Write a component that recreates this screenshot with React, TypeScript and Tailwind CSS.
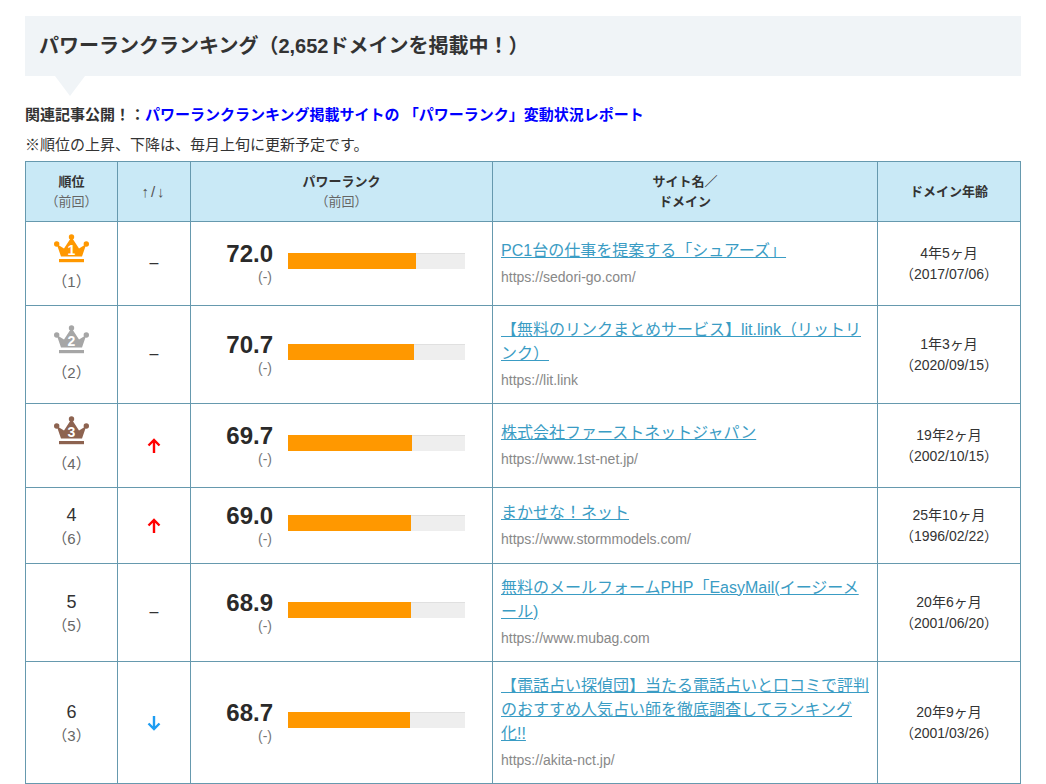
const FONT = "font-['Liberation_Sans','Noto_Sans_CJK_JP',sans-serif]";

interface Site {
  rank: number;
  prev: number;
  move: "same" | "up" | "down";
  score: number;
  name: string;
  url: string;
  age: string;
  date: string;
  rowClass: string;
}

const sites: Site[] = [
  { rank: 1, prev: 1, move: "same", score: 72.0, name: "PC1台の仕事を提案する「シュアーズ」", url: "https://sedori-go.com/", age: "4年5ヶ月", date: "（2017/07/06）", rowClass: "h-[84px]" },
  { rank: 2, prev: 2, move: "same", score: 70.7, name: "【無料のリンクまとめサービス】lit.link（リットリンク）", url: "https://lit.link", age: "1年3ヶ月", date: "（2020/09/15）", rowClass: "h-[98px]" },
  { rank: 3, prev: 4, move: "up", score: 69.7, name: "株式会社ファーストネットジャパン", url: "https://www.1st-net.jp/", age: "19年2ヶ月", date: "（2002/10/15）", rowClass: "h-[84px]" },
  { rank: 4, prev: 6, move: "up", score: 69.0, name: "まかせな！ネット", url: "https://www.stormmodels.com/", age: "25年10ヶ月", date: "（1996/02/22）", rowClass: "h-[76px]" },
  { rank: 5, prev: 5, move: "same", score: 68.9, name: "無料のメールフォームPHP「EasyMail(イージーメール)", url: "https://www.mubag.com", age: "20年6ヶ月", date: "（2001/06/20）", rowClass: "h-[98px]" },
  { rank: 6, prev: 3, move: "down", score: 68.7, name: "【電話占い探偵団】当たる電話占いと口コミで評判のおすすめ人気占い師を徹底調査してランキング化!!", url: "https://akita-nct.jp/", age: "20年9ヶ月", date: "（2001/03/26）", rowClass: "h-[122px]" },
];

const crownColors: Record<number, string> = { 1: "#ff9800", 2: "#a6a6a6", 3: "#8d6350" };

const Crown = ({ rank }: { rank: number }) => (
  <svg width="36" height="29" viewBox="0.5 0 36 29" className="mx-auto block" fill={crownColors[rank]}>
    <circle cx="3.2" cy="10" r="2.7" />
    <circle cx="18" cy="3" r="2.7" />
    <circle cx="32.8" cy="10" r="2.7" />
    <path d="M3.2 10 L10.5 14.5 L18 3 L25.5 14.5 L32.8 10 L28.5 22.5 H7.5 Z" />
    <rect x="5.5" y="25" width="25" height="3.2" />
    <text x="18" y="21" textAnchor="middle" fontSize="14" fontWeight="700" fill="#fff" fontFamily="Liberation Sans">
      {rank}
    </text>
  </svg>
);

const MoveIcon = ({ move }: { move: Site["move"] }) => {
  if (move === "same") return <span className="-mt-[2px] block text-[16px] text-[#333]">–</span>;
  const color = move === "up" ? "#ff0000" : "#1e9df2";
  const d = move === "up" ? "M7 15 V2 M1.5 7.5 L7 2 L12.5 7.5" : "M7 1 V14 M1.5 8.5 L7 14 L12.5 8.5";
  return (
    <svg width="14" height="16" viewBox="0 0 14 16" className="mx-auto block" fill="none" stroke={color} strokeWidth="2.4">
      <path d={d} />
    </svg>
  );
};

const cell = "border border-[#6699ae] align-middle";
const head = "border border-[#6699ae] bg-[#c9e9f6] text-center text-[13px] font-bold leading-[20px] text-[#333]";

const App = () => {
  return (
    <div className={`${FONT} h-[784px] w-[1046px] overflow-hidden bg-white px-[25px] pt-4 text-[#333]`}>
      <div className="relative flex h-[60px] items-center bg-[#f0f4f7] pl-[14px]">
        <h1 className="text-[20px] font-bold text-[#333]">パワーランクランキング（2,652ドメインを掲載中！）</h1>
        <div className="absolute left-[30px] top-[60px] h-0 w-0 border-x-[15px] border-t-[20px] border-x-transparent border-t-[#f0f4f7]" />
      </div>
      <p className="mt-[28px] text-[15px] font-bold leading-[22px]">
        関連記事公開！：<a className="text-[#0000ff]">パワーランクランキング掲載サイトの 「パワーランク」変動状況レポート</a>
      </p>
      <p className="mt-[8px] text-[15px] leading-[22px]">※順位の上昇、下降は、毎月上旬に更新予定です。</p>
      <table className="mt-[5px] w-[995px] table-fixed border-collapse">
        <colgroup>
          <col className="w-[92px]" />
          <col className="w-[73px]" />
          <col className="w-[302px]" />
          <col className="w-[385px]" />
          <col className="w-[143px]" />
        </colgroup>
        <thead>
          <tr className="h-[60px]">
            <th className={head}>
              順位
              <br />
              <span className="font-normal text-[#666]">（前回）</span>
            </th>
            <th className={`${head} text-[15px] font-normal tracking-[2px] text-[#555]`}>↑/↓</th>
            <th className={head}>
              パワーランク
              <br />
              <span className="font-normal text-[#666]">（前回）</span>
            </th>
            <th className={head}>
              サイト名／
              <br />
              ドメイン
            </th>
            <th className={head}>ドメイン年齢</th>
          </tr>
        </thead>
        <tbody>
          {sites.map((site) => (
            <tr key={site.rank} className={site.rowClass}>
              <td className={`${cell} text-center ${site.rank <= 3 ? "" : "pt-[2px]"}`}>
                {site.rank <= 3 ? (
                  <Crown rank={site.rank} />
                ) : (
                  <div className="text-[18px] leading-[24px]">{site.rank}</div>
                )}
                <div className={`text-[15px] leading-[22px] text-[#666] ${site.rank <= 3 ? "mt-[8px]" : "mt-[1px]"}`}>（{site.prev}）</div>
              </td>
              <td className={`${cell} text-center`}>
                <MoveIcon move={site.move} />
              </td>
              <td className={cell}>
                <div className="flex items-center pl-[15px]">
                  <div className="w-[67px] text-right">
                    <div className="text-[24px] font-bold leading-[26px] text-[#2a2a2a]">{site.score.toFixed(1)}</div>
                    <div className="pr-[1px] text-[14px] leading-[20px] text-[#777]">(-)</div>
                  </div>
                  <div className="ml-[15px] -mt-[6px] h-4 w-[177px] bg-[#eeeeee] shadow-[inset_0_1px_0_#e0e0e0]">
                    <div className="h-full bg-[#ff9800]" style={{ width: `${site.score * 1.78}px` }} />
                  </div>
                </div>
              </td>
              <td className={`${cell} px-[8px] pb-[1px]`}>
                <a className="block text-[16px] leading-[24px] text-[#3a9cc4] underline">{site.name}</a>
                <div className="mt-[3px] text-[14px] leading-[22px] text-[#888]">{site.url}</div>
              </td>
              <td className={`${cell} text-center text-[14px] leading-[21px]`}>
                {site.age}
                <br />
                {site.date}
              </td>
            </tr>
          ))}
        </tbody>
      </table>
    </div>
  );
};

export default App;
